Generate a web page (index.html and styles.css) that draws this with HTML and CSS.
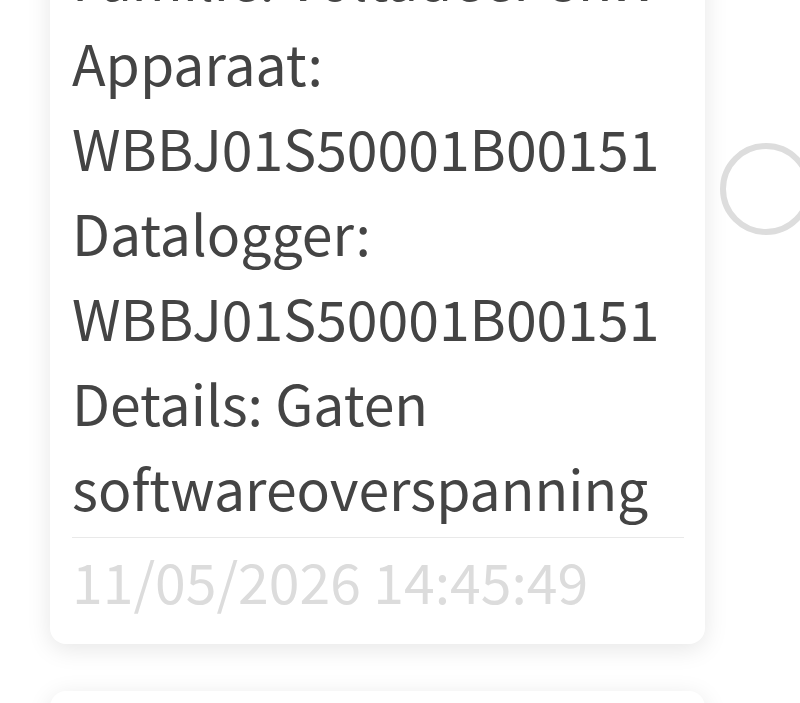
FILE: index.html
```html
<!DOCTYPE html>
<html lang="nl">
<head>
<meta charset="utf-8">
<link rel="stylesheet" href="styles.css">
</head>
<body>
<div class="page">
  <div class="list">
    <div class="card">
      <div class="body">
        <div class="line">Familie: Voltadeer 8kW</div>
        <div class="line">Apparaat:</div>
        <div class="line">WBBJ01S50001B00151</div>
        <div class="line">Datalogger:</div>
        <div class="line">WBBJ01S50001B00151</div>
        <div class="line">Details: Gaten</div>
        <div class="line">softwareoverspanning</div>
      </div>
      <div class="footer">11/05/2026 14:45:49</div>
    </div>
    <div class="card next"></div>
  </div>
  <div class="side">
    <div class="radio"></div>
  </div>
</div>
</body>
</html>
```
FILE: styles.css
```css
html, body {
  margin: 0;
  padding: 0;
  background: #ffffff;
  overflow: hidden;
  height: 703px;
}
body {
  font-family: "Noto Sans CJK SC", "Noto Sans", sans-serif;
}
.page {
  display: flex;
  align-items: flex-start;
  margin-top: -65px;
  padding-left: 50px;
}
.list {
  flex: 0 0 655px;
  width: 655px;
  display: flex;
  flex-direction: column;
  gap: 47px;
}
.card {
  background: #ffffff;
  border-radius: 16px;
  box-shadow: 0 5px 24px rgba(0, 0, 0, 0.1);
  padding: 0 21px 21px 22px;
}
.body {
  padding-bottom: 7px;
  border-bottom: 1px solid #e9e9e9;
}
.line {
  font-size: 55.3px;
  line-height: 85px;
  color: #444444;
  white-space: nowrap;
}
.footer {
  font-size: 55.3px;
  line-height: 85px;
  color: #dcdcdc;
  white-space: nowrap;
}
.card.next {
  height: 200px;
}
.side {
  flex: 0 0 auto;
  padding-top: 208px;
  padding-left: 15px;
}
.radio {
  width: 80px;
  height: 80px;
  border: 6px solid #dddddd;
  border-radius: 50%;
}
```
